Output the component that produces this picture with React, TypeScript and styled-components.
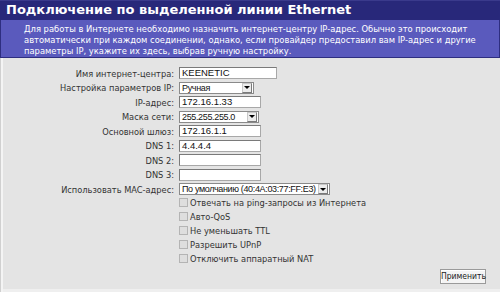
import React from "react";
import styled, { createGlobalStyle } from "styled-components";

const Global = createGlobalStyle`
  html, body {
    margin: 0;
    padding: 0;
    background: #e4e4e4;
  }
  body {
    font-family: "DejaVu Sans Condensed", "DejaVu Sans", Verdana, sans-serif;
  }
`;

const Page = styled.div`
  width: 500px;
  height: 292px;
  display: flex;
  flex-direction: column;
  box-sizing: border-box;
  overflow: hidden;
`;

const TitleBar = styled.div`
  height: 20px;
  background: #28287a;
  border-top: 1px solid #3a3a8c;
  box-sizing: border-box;
  color: #ffffff;
  font-family: "DejaVu Sans", Verdana, sans-serif;
  font-weight: bold;
  font-size: 13px;
  line-height: 18px;
  padding-left: 6px;
  white-space: nowrap;
`;

const Intro = styled.div`
  background: #5a5abd;
  border: 1px solid #2e2e80;
  border-top: none;
  color: #ffffff;
  font-size: 9.3px;
  line-height: 11px;
  padding: 3px 10px 4px 23px;
  height: 38px;
  box-sizing: border-box;
  white-space: nowrap;
`;

const Body = styled.div`
  flex: 1;
  background: #e4e4e4;
  border-left: 1px solid #d0d0d0;
  box-shadow: inset 2px 0 0 #f4f4f4, inset 0 -3px 0 #efefef;
  padding: 8px 12px 0 0;
  display: flex;
  flex-direction: column;
`;

const Form = styled.div`
  display: grid;
  grid-template-columns: 173px 1fr;
  column-gap: 5px;
  grid-auto-rows: 14.5px;
  align-items: center;
`;

const Label = styled.div`
  text-align: right;
  font-size: 9.2px;
  color: #333333;
  white-space: nowrap;
`;

const TextBox = styled.div<{ w: number }>`
  width: ${(p) => p.w}px;
  height: 12px;
  box-sizing: border-box;
  background: #ffffff;
  border: 1px solid #a8a8a8;
  border-top-color: #7a7a7a;
  border-left-color: #7a7a7a;
  font-family: "Liberation Sans", Arial, sans-serif;
  font-size: 9.5px;
  line-height: 10px;
  padding-left: 2px;
  color: #111111;
  white-space: nowrap;
  overflow: hidden;
`;

const Select = styled.div<{ w: number }>`
  width: ${(p) => p.w}px;
  height: 12px;
  box-sizing: border-box;
  background: #ffffff;
  border: 1px solid #8a8a8a;
  display: flex;
  align-items: stretch;
  font-family: "Liberation Sans", Arial, sans-serif;
  font-size: 9px;
  letter-spacing: -0.35px;
  line-height: 10px;
  color: #111111;
`;

const SelectText = styled.span`
  flex: 1;
  padding-left: 2px;
  white-space: nowrap;
  overflow: hidden;
`;

const Arrow = styled.span`
  flex: none;
  width: 10px;
  margin: 0 1px 0 0;
  background: #ececec;
  border: 1px solid #c8c8c8;
  border-right-color: #7a7a7a;
  border-bottom-color: #7a7a7a;
  box-sizing: border-box;
  display: flex;
  align-items: center;
  justify-content: center;
  &::after {
    content: "";
    border-left: 3px solid transparent;
    border-right: 3px solid transparent;
    border-top: 3px solid #000000;
  }
`;

const CheckList = styled.div`
  display: grid;
  grid-auto-rows: 14px;
  align-items: center;
  padding-left: 178px;
  margin-top: -1px;
`;

const CheckRow = styled.label`
  display: flex;
  align-items: center;
  gap: 2px;
  font-size: 9.2px;
  color: #333333;
  white-space: nowrap;
`;

const Box = styled.span`
  width: 9px;
  height: 9px;
  box-sizing: border-box;
  background: #dedede;
  border: 1px solid #b4b4b4;
`;

const Footer = styled.div`
  display: flex;
  justify-content: flex-end;
  padding: 3px 2px 0 0;
`;

const Button = styled.button`
  font-family: "DejaVu Sans Condensed", "DejaVu Sans", Verdana, sans-serif;
  font-size: 8.5px;
  color: #222222;
  background: #f4f4f4;
  border: 1px solid #9a9a9a;
  box-shadow: inset 1px 1px 0 #ffffff;
  height: 15px;
  width: 46px;
  padding: 0;
`;

const fields: { label: string; kind: "text" | "select"; value: string; w: number }[] = [
  { label: "Имя интернет-центра:", kind: "text", value: "KEENETIC", w: 98 },
  { label: "Настройка параметров IP:", kind: "select", value: "Ручная", w: 75 },
  { label: "IP-адрес:", kind: "text", value: "172.16.1.33", w: 82 },
  { label: "Маска сети:", kind: "select", value: "255.255.255.0", w: 80 },
  { label: "Основной шлюз:", kind: "text", value: "172.16.1.1", w: 82 },
  { label: "DNS 1:", kind: "text", value: "4.4.4.4", w: 82 },
  { label: "DNS 2:", kind: "text", value: "", w: 82 },
  { label: "DNS 3:", kind: "text", value: "", w: 82 },
  { label: "Использовать MAC-адрес:", kind: "select", value: "По умолчанию (40:4A:03:77:FF:E3)", w: 151 },
];

const options = [
  "Отвечать на ping-запросы из Интернета",
  "Авто-QoS",
  "Не уменьшать TTL",
  "Разрешить UPnP",
  "Отключить аппаратный NAT",
];

export default function App() {
  return (
    <Page>
      <Global />
      <TitleBar>Подключение по выделенной линии Ethernet</TitleBar>
      <Intro>
        Для работы в Интернете необходимо назначить интернет-центру IP-адрес. Обычно это происходит
        <br />
        автоматически при каждом соединении, однако, если провайдер предоставил вам IP-адрес и другие
        <br />
        параметры IP, укажите их здесь, выбрав ручную настройку.
      </Intro>
      <Body>
        <Form>
          {fields.map((f) => (
            <React.Fragment key={f.label}>
              <Label>{f.label}</Label>
              {f.kind === "text" ? (
                <TextBox w={f.w}>{f.value}</TextBox>
              ) : (
                <Select w={f.w}>
                  <SelectText>{f.value}</SelectText>
                  <Arrow />
                </Select>
              )}
            </React.Fragment>
          ))}
        </Form>
        <CheckList>
          {options.map((o) => (
            <CheckRow key={o}>
              <Box />
              {o}
            </CheckRow>
          ))}
        </CheckList>
        <Footer>
          <Button>Применить</Button>
        </Footer>
      </Body>
    </Page>
  );
}
